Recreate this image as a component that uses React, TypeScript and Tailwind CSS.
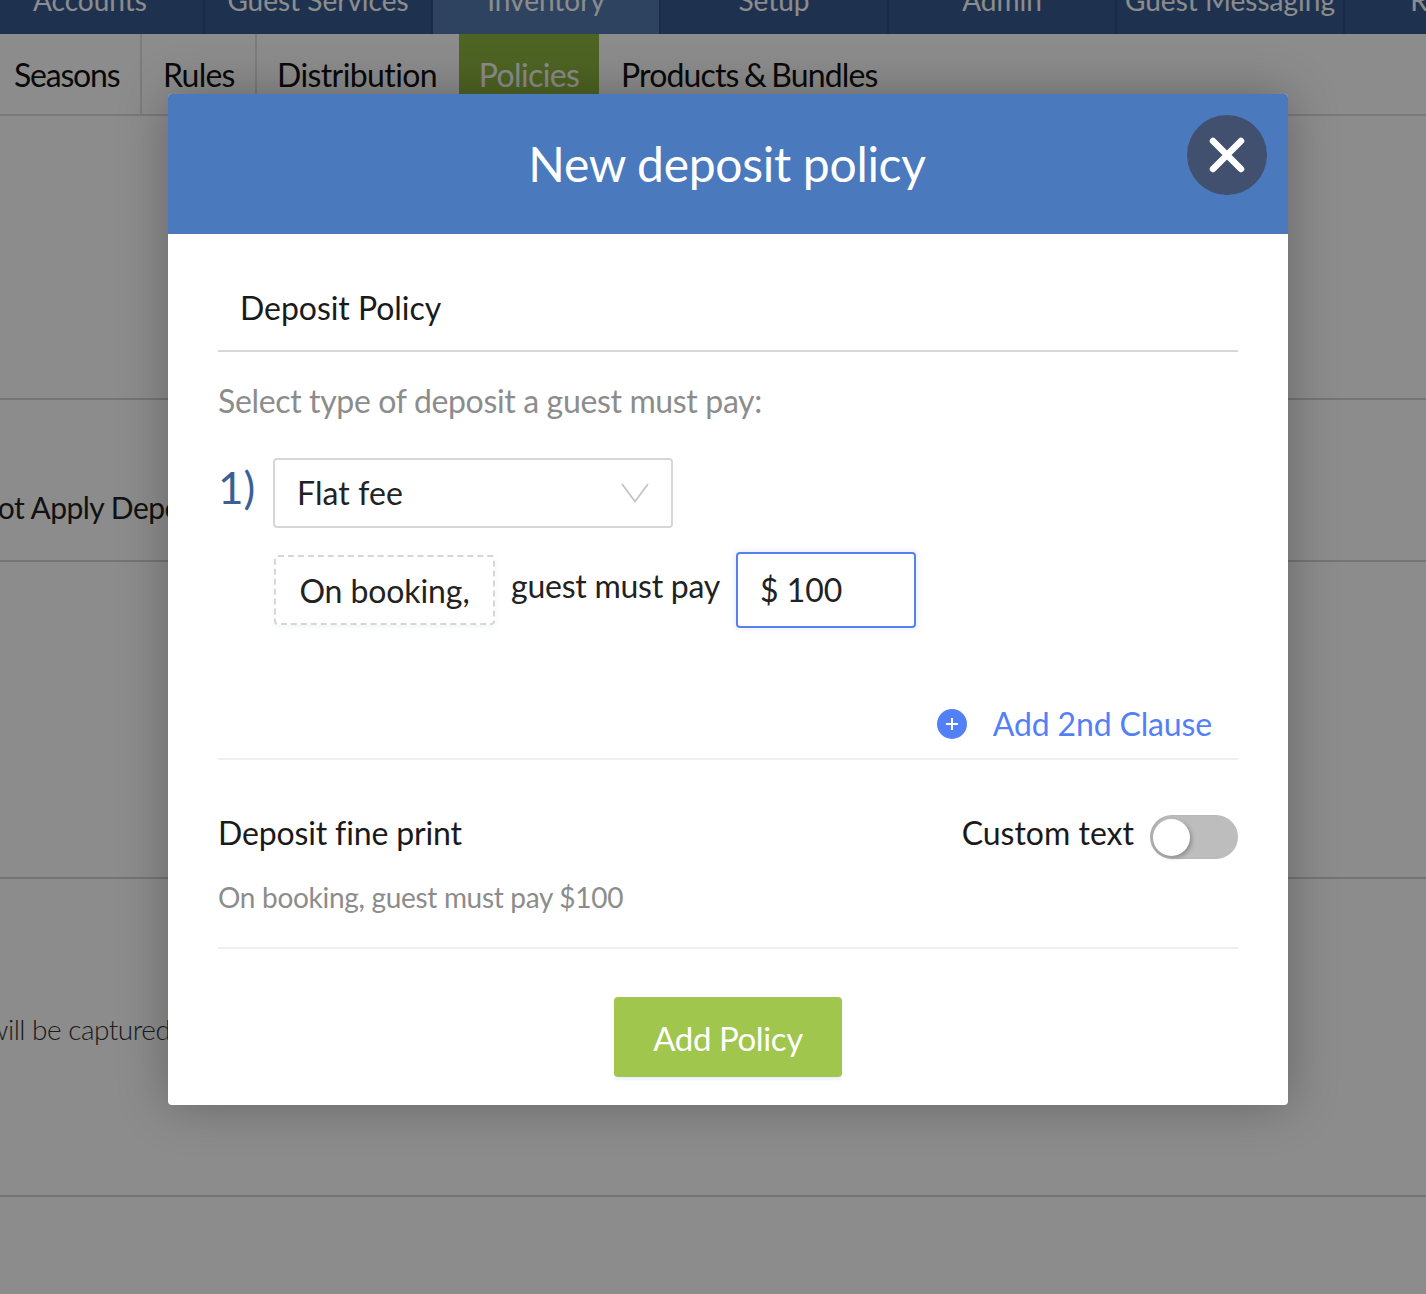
import React from "react";

const topTabs = ["Accounts", "Guest Services", "Inventory", "Setup", "Admin", "Guest Messaging", "Reports"];

function TopNav() {
  return (
    <div className="flex h-[34px] overflow-hidden bg-[#385c91] -ml-[23px]">
      {topTabs.map((tab) => (
        <div
          key={tab}
          className={`flex h-[34px] w-[228px] shrink-0 items-end justify-center border-r-2 border-[#30507f] pb-[17px] text-[28px] leading-[34px] text-white ${
            tab === "Inventory" ? "bg-[#557aae]" : ""
          }`}
        >
          {tab}
        </div>
      ))}
    </div>
  );
}

function SubNav() {
  return (
    <div className="flex h-[82px] border-b-2 border-[#dcdcdc] bg-white text-[32px] tracking-[-0.6px] text-[#111]">
      <div className="flex w-[142px] items-center border-r-2 border-[#e2e2e2] pl-[14px] pt-[1px] tracking-[-1.2px]">Seasons</div>
      <div className="flex w-[115px] items-center border-r-2 border-[#e2e2e2] pl-[21px] pt-[1px] tracking-[-0.8px]">Rules</div>
      <div className="flex w-[202px] items-center pl-[20px] pt-[1px]">Distribution</div>
      <div className="flex w-[140px] items-center justify-center bg-[#8fb641] pt-[1px] text-white">Policies</div>
      <div className="flex items-center pl-[22px] pt-[1px] tracking-[-0.85px] [word-spacing:-2px]">Products &amp; Bundles</div>
    </div>
  );
}

function BackgroundPage() {
  return (
    <div className="h-[1294px] overflow-hidden bg-white">
      <TopNav />
      <SubNav />
      <div className="h-[284px] border-b-2 border-[#d4d4d4]" />
      <div className="flex h-[162px] items-start overflow-hidden border-b-2 border-[#d4d4d4]">
        <span className="-ml-[70px] mt-[87px] whitespace-nowrap text-[30px] leading-[40px] tracking-[-0.5px] text-[#222]">
          Do Not Apply Deposit
        </span>
      </div>
      <div className="h-[317px] border-b-2 border-[#d4d4d4]" />
      <div className="flex h-[318px] overflow-hidden border-b-2 border-[#d4d4d4]">
        <span className="-ml-[13px] mt-[132px] whitespace-nowrap text-[28px] font-light leading-[36px] tracking-[-0.5px] text-[#333]">
          will be captured on booking
        </span>
      </div>
    </div>
  );
}

function Toggle() {
  return (
    <div className="flex h-[44px] w-[88px] items-center rounded-full bg-[#bdbdbd] pl-[3px] shadow-[inset_3px_0_2px_rgba(0,0,0,0.08)]">
      <div className="h-[37px] w-[37px] rounded-full bg-white shadow-[2px_2px_4px_rgba(0,0,0,0.25)]" />
    </div>
  );
}

function Modal() {
  return (
    <div className="absolute left-[168px] top-[94px] h-[1011px] w-[1120px] overflow-hidden rounded-[4px] bg-white shadow-[0_0_50px_rgba(0,0,0,0.28)]">
      <div className="relative flex h-[140px] items-center justify-center bg-[#4a79bd] pr-[2px]">
        <h1 className="text-[48px] leading-none tracking-[-0.3px] text-white">New deposit policy</h1>
        <button className="absolute right-[21px] top-[21px] flex h-[80px] w-[80px] items-center justify-center rounded-full bg-[#42506f]">
          <svg width="36" height="36" viewBox="0 0 36 36" className="-mt-[1px]">
            <path d="M4 4 L32 32 M32 4 L4 32" stroke="#fff" strokeWidth="6.5" strokeLinecap="round" />
          </svg>
        </button>
      </div>

      <div className="px-[50px]">
        <div className="flex h-[118px] items-end border-b-2 border-[#d8d8d8] pb-[20px] pl-[22px] text-[32px] leading-[44px] tracking-[-0.05px] text-[#1a1a1a]">
          Deposit Policy
        </div>
        <p className="mt-[27px] text-[32px] leading-[44px] tracking-[-0.35px] text-[#8c8c8c]">
          Select type of deposit a guest must pay:
        </p>

        <div className="mt-[35px] flex items-start">
          <span className="-mt-[1px] w-[55px] text-[44px] leading-[60px] text-[#3a6094]">1)</span>
          <div className="flex h-[70px] w-[400px] items-center justify-between rounded-[4px] border-2 border-[#d6d6d6] pl-[22px] pr-[22px] text-[32px] tracking-[0.1px] text-[#222]">
            Flat fee
            <svg width="28" height="20" viewBox="0 0 28 20" fill="none">
              <path d="M1 1 L14 18.5 L27 1" stroke="#c4c4c4" strokeWidth="1.8" />
            </svg>
          </div>
        </div>

        <div className="mt-[24px] flex items-center pl-[56px]">
          <div className="flex h-[70px] w-[221px] items-center justify-center rounded-[4px] border-2 border-dashed border-[#d6d6d6] pt-[2px] text-[32px] tracking-[-0.1px] text-[#222] shadow-[0_2px_4px_rgba(230,235,245,0.5)]">
            On booking,
          </div>
          <span className="mb-[8px] ml-[16px] w-[225px] text-[32px] leading-[40px] tracking-[-0.25px] text-[#222]">guest must pay</span>
          <div className="flex h-[76px] w-[180px] items-center rounded-[4px] border-2 border-[#5480f0] pl-[22px] text-[32px] text-[#222] shadow-[0_0_4px_3px_rgba(84,128,240,0.08)]">
            $ 100
          </div>
        </div>

        <div className="mt-[74px] flex items-center justify-end pr-[26px]">
          <span className="flex h-[30px] w-[30px] items-center justify-center rounded-full bg-[#5480f7]">
            <svg width="14" height="14" viewBox="0 0 14 14">
              <path d="M7 1 V13 M1 7 H13" stroke="#fff" strokeWidth="2" />
            </svg>
          </span>
          <span className="ml-[26px] text-[32px] leading-[44px] tracking-[-0.15px] text-[#5480f7]">Add 2nd Clause</span>
        </div>

        <div className="mt-[12px] border-t-2 border-[#efefef]" />

        <div className="mt-[51px] flex items-center justify-between">
          <span className="mb-[8px] text-[32px] leading-[44px] tracking-[-0.15px] text-[#1a1a1a]">Deposit fine print</span>
          <div className="flex items-center">
            <span className="mb-[8px] mr-[16px] text-[32px] leading-[44px] text-[#1a1a1a]">Custom text</span>
            <Toggle />
          </div>
        </div>

        <p className="mt-[14px] text-[28px] leading-[40px] tracking-[-0.3px] text-[#8c8c8c]">
          On booking, guest must pay $100
        </p>

        <div className="mt-[30px] border-t-2 border-[#efefef]" />

        <div className="mt-[48px] flex justify-center">
          <button className="h-[80px] w-[228px] rounded-[4px] bg-[#a0c64e] pt-[4px] text-[33px] tracking-[-0.4px] text-white shadow-[0_3px_2px_rgba(220,232,250,0.5)]">
            Add Policy
          </button>
        </div>
      </div>
    </div>
  );
}

export default function App() {
  return (
    <div className="relative h-[1294px] w-[1426px] overflow-hidden font-['Lato',sans-serif]">
      <BackgroundPage />
      <div className="absolute inset-0 bg-black/45" />
      <Modal />
    </div>
  );
}
